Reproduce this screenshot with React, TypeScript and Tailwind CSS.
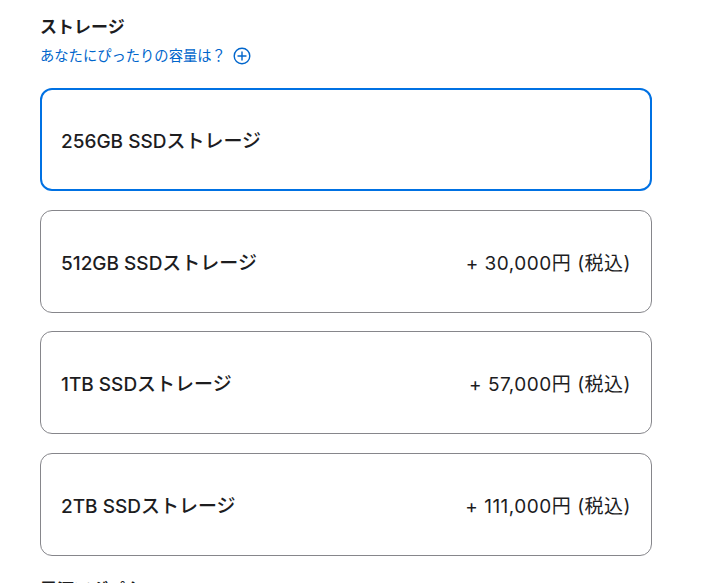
import { useState } from "react";

const opciones = [
  { id: "256", nome: "256GB SSDストレージ", preco: "" },
  { id: "512", nome: "512GB SSDストレージ", preco: "+ 30,000円 (税込)" },
  { id: "1tb", nome: "1TB SSDストレージ", preco: "+ 57,000円 (税込)" },
  { id: "2tb", nome: "2TB SSDストレージ", preco: "+ 111,000円 (税込)" },
];

export default function App() {
  const [sel, setSel] = useState("256");

  return (
    <section
      className="min-h-screen bg-white text-[#1d1d1f] pl-10 pr-[65px] pt-[15px]"
      style={{ fontFamily: '"Inter", "Noto Sans CJK JP", sans-serif' }}
    >
      <h2 className="text-[17px] font-bold leading-[24px]">ストレージ</h2>
      <a href="#" className="mt-[7px] flex items-center gap-[7px] text-[14.3px] leading-[20px] text-[#0066cc]">
        あなたにぴったりの容量は？
        <svg width="18" height="18" viewBox="0 0 18 18" fill="none" stroke="currentColor" strokeWidth="1.4">
          <circle cx="9" cy="9" r="7.8" />
          <path d="M9 5v8M5 9h8" strokeLinecap="round" />
        </svg>
      </a>

      <div className="mt-[22px] flex flex-col gap-[18.5px]">
        {opciones.map((o) => (
          <button
            key={o.id}
            onClick={() => setSel(o.id)}
            className={
              sel === o.id
                ? "h-[103px] w-full rounded-[12px] border-2 border-[#0071e3] px-[19px] pt-[6px] flex items-center justify-between text-left"
                : "h-[103px] w-full rounded-[12px] border border-[#86868b] px-[20px] pt-[6px] flex items-center justify-between text-left"
            }
          >
            <span className="text-[19px] font-medium">{o.nome}</span>
            <span className="text-[19px] tracking-[0.5px]">{o.preco}</span>
          </button>
        ))}
      </div>

      <h2 className="mt-[22px] text-[17px] font-bold leading-[24px]">電源アダプタ</h2>
    </section>
  );
}
